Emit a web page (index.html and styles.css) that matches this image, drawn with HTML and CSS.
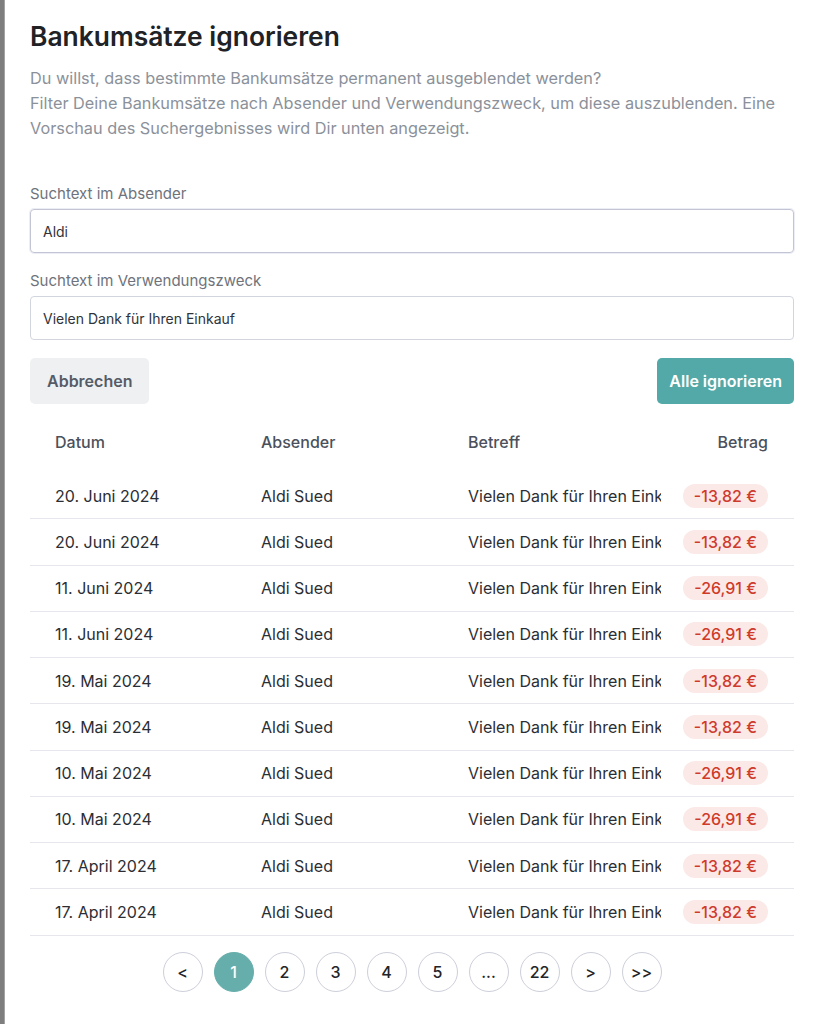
FILE: index.html
```html
<!DOCTYPE html>
<html lang="de">
<head>
<meta charset="utf-8">
<title>Bankumsätze ignorieren</title>
<link rel="stylesheet" href="styles.css">
</head>
<body>
<div class="page">
  <div class="backdrop"></div>
  <div class="modal">
    <h1 class="title">Bankumsätze ignorieren</h1>
    <p class="desc">Du willst, dass bestimmte Bankumsätze permanent ausgeblendet werden?<br>Filter Deine Bankumsätze nach Absender und Verwendungszweck, um diese auszublenden. Eine Vorschau des Suchergebnisses wird Dir unten angezeigt.</p>

    <label class="label label-first">Suchtext im Absender</label>
    <div class="input input-focus">Aldi</div>
    <label class="label">Suchtext im Verwendungszweck</label>
    <div class="input">Vielen Dank für Ihren Einkauf</div>

    <div class="actions">
      <button class="btn btn-cancel">Abbrechen</button>
      <button class="btn btn-primary">Alle ignorieren</button>
    </div>

    <div class="table">
      <div class="row head">
        <div class="cell">Datum</div>
        <div class="cell">Absender</div>
        <div class="cell">Betreff</div>
        <div class="cell amount">Betrag</div>
      </div>
      <div class="row"><div class="cell">20. Juni 2024</div><div class="cell">Aldi Sued</div><div class="cell clip">Vielen Dank für Ihren Einkauf</div><div class="cell amount"><span class="badge">-13,82 €</span></div></div>
      <div class="row"><div class="cell">20. Juni 2024</div><div class="cell">Aldi Sued</div><div class="cell clip">Vielen Dank für Ihren Einkauf</div><div class="cell amount"><span class="badge">-13,82 €</span></div></div>
      <div class="row"><div class="cell">11. Juni 2024</div><div class="cell">Aldi Sued</div><div class="cell clip">Vielen Dank für Ihren Einkauf</div><div class="cell amount"><span class="badge">-26,91 €</span></div></div>
      <div class="row"><div class="cell">11. Juni 2024</div><div class="cell">Aldi Sued</div><div class="cell clip">Vielen Dank für Ihren Einkauf</div><div class="cell amount"><span class="badge">-26,91 €</span></div></div>
      <div class="row"><div class="cell">19. Mai 2024</div><div class="cell">Aldi Sued</div><div class="cell clip">Vielen Dank für Ihren Einkauf</div><div class="cell amount"><span class="badge">-13,82 €</span></div></div>
      <div class="row"><div class="cell">19. Mai 2024</div><div class="cell">Aldi Sued</div><div class="cell clip">Vielen Dank für Ihren Einkauf</div><div class="cell amount"><span class="badge">-13,82 €</span></div></div>
      <div class="row"><div class="cell">10. Mai 2024</div><div class="cell">Aldi Sued</div><div class="cell clip">Vielen Dank für Ihren Einkauf</div><div class="cell amount"><span class="badge">-26,91 €</span></div></div>
      <div class="row"><div class="cell">10. Mai 2024</div><div class="cell">Aldi Sued</div><div class="cell clip">Vielen Dank für Ihren Einkauf</div><div class="cell amount"><span class="badge">-26,91 €</span></div></div>
      <div class="row"><div class="cell">17. April 2024</div><div class="cell">Aldi Sued</div><div class="cell clip">Vielen Dank für Ihren Einkauf</div><div class="cell amount"><span class="badge">-13,82 €</span></div></div>
      <div class="row"><div class="cell">17. April 2024</div><div class="cell">Aldi Sued</div><div class="cell clip">Vielen Dank für Ihren Einkauf</div><div class="cell amount"><span class="badge">-13,82 €</span></div></div>
    </div>

    <div class="pager">
      <span class="pg">&lt;</span>
      <span class="pg active">1</span>
      <span class="pg">2</span>
      <span class="pg">3</span>
      <span class="pg">4</span>
      <span class="pg">5</span>
      <span class="pg">...</span>
      <span class="pg">22</span>
      <span class="pg">&gt;</span>
      <span class="pg">&gt;&gt;</span>
    </div>
  </div>
</div>
</body>
</html>
```

FILE: styles.css
```css
* { box-sizing: border-box; }
html, body { margin: 0; padding: 0; height: 100%; }
body {
  font-family: Inter, "Noto Sans", "Liberation Sans", sans-serif;
  background: #ffffff;
  overflow: hidden;
}
.page {
  display: flex;
  height: 1024px;
}
.backdrop {
  width: 5px;
  flex: 0 0 5px;
  background: #7e7e7e;
  border-right: 1px solid #a3a3a3;
}
.modal {
  flex: 1;
  background: #fff;
  padding: 20px 19px 0 25px;
  display: flex;
  flex-direction: column;
}
.title {
  margin: 0;
  font-size: 26.4px;
  line-height: 32px;
  font-weight: 600;
  color: #202226;
}
.desc {
  margin: 14px 0 0;
  font-size: 16.3px;
  line-height: 25px;
  color: #8b919a;
}
.label {
  display: block;
  font-size: 15px;
  line-height: 20px;
  color: #6e737b;
  margin-top: 18px;
}
.label-first { margin-top: 43px; }
.input {
  margin-top: 5px;
  height: 44px;
  border: 1px solid #d3d5de;
  border-radius: 4px;
  padding: 0 12px;
  display: flex;
  align-items: center;
  font-size: 14px;
  color: #30333a;
}
.input-focus {
  border: 1.5px solid #c3c4d4;
  box-shadow: 0 0 0 1px #eceef5;
}
.actions {
  margin-top: 18px;
  display: flex;
  justify-content: space-between;
}
.btn {
  height: 46px;
  border: none;
  border-radius: 5px;
  font-family: inherit;
  font-size: 16px;
  font-weight: 600;
  cursor: pointer;
}
.btn-cancel {
  background: #eff0f2;
  color: #555c67;
  padding: 0 17px;
}
.btn-primary {
  background: #52a9a8;
  color: #ffffff;
  padding: 0 12px;
}
.table {
  margin-top: 18px;
  display: flex;
  flex-direction: column;
}
.row {
  display: grid;
  grid-template-columns: 206px 207px 218px 1fr;
  height: 46.25px;
  align-items: center;
  border-bottom: 1.5px solid #e6e7ec;
  font-size: 16px;
  color: #2b2e34;
}
.row.head {
  height: 40px;
  margin-bottom: 11px;
  border-bottom: none;
  color: #4a515c;
  font-weight: 500;
}
.cell {
  padding-left: 25px;
  white-space: nowrap;
  overflow: hidden;
}
.cell.clip { text-overflow: clip; }
.cell.amount {
  text-align: right;
  padding-left: 0;
  padding-right: 26px;
}
.badge {
  display: inline-block;
  background: #fbe9e8;
  color: #cf3b2b;
  font-weight: 500;
  border-radius: 12px;
  padding: 0 11px;
  height: 24px;
  line-height: 24px;
}
.pager {
  margin-top: 16px;
  display: flex;
  justify-content: center;
  gap: 11px;
}
.pg {
  width: 40px;
  height: 40px;
  border-radius: 50%;
  border: 1.5px solid #cdcfda;
  display: flex;
  align-items: center;
  justify-content: center;
  font-size: 16px;
  font-weight: 500;
  color: #222429;
}
.pg.active {
  background: #66aeac;
  border-color: #66aeac;
  color: #ffffff;
}
```
